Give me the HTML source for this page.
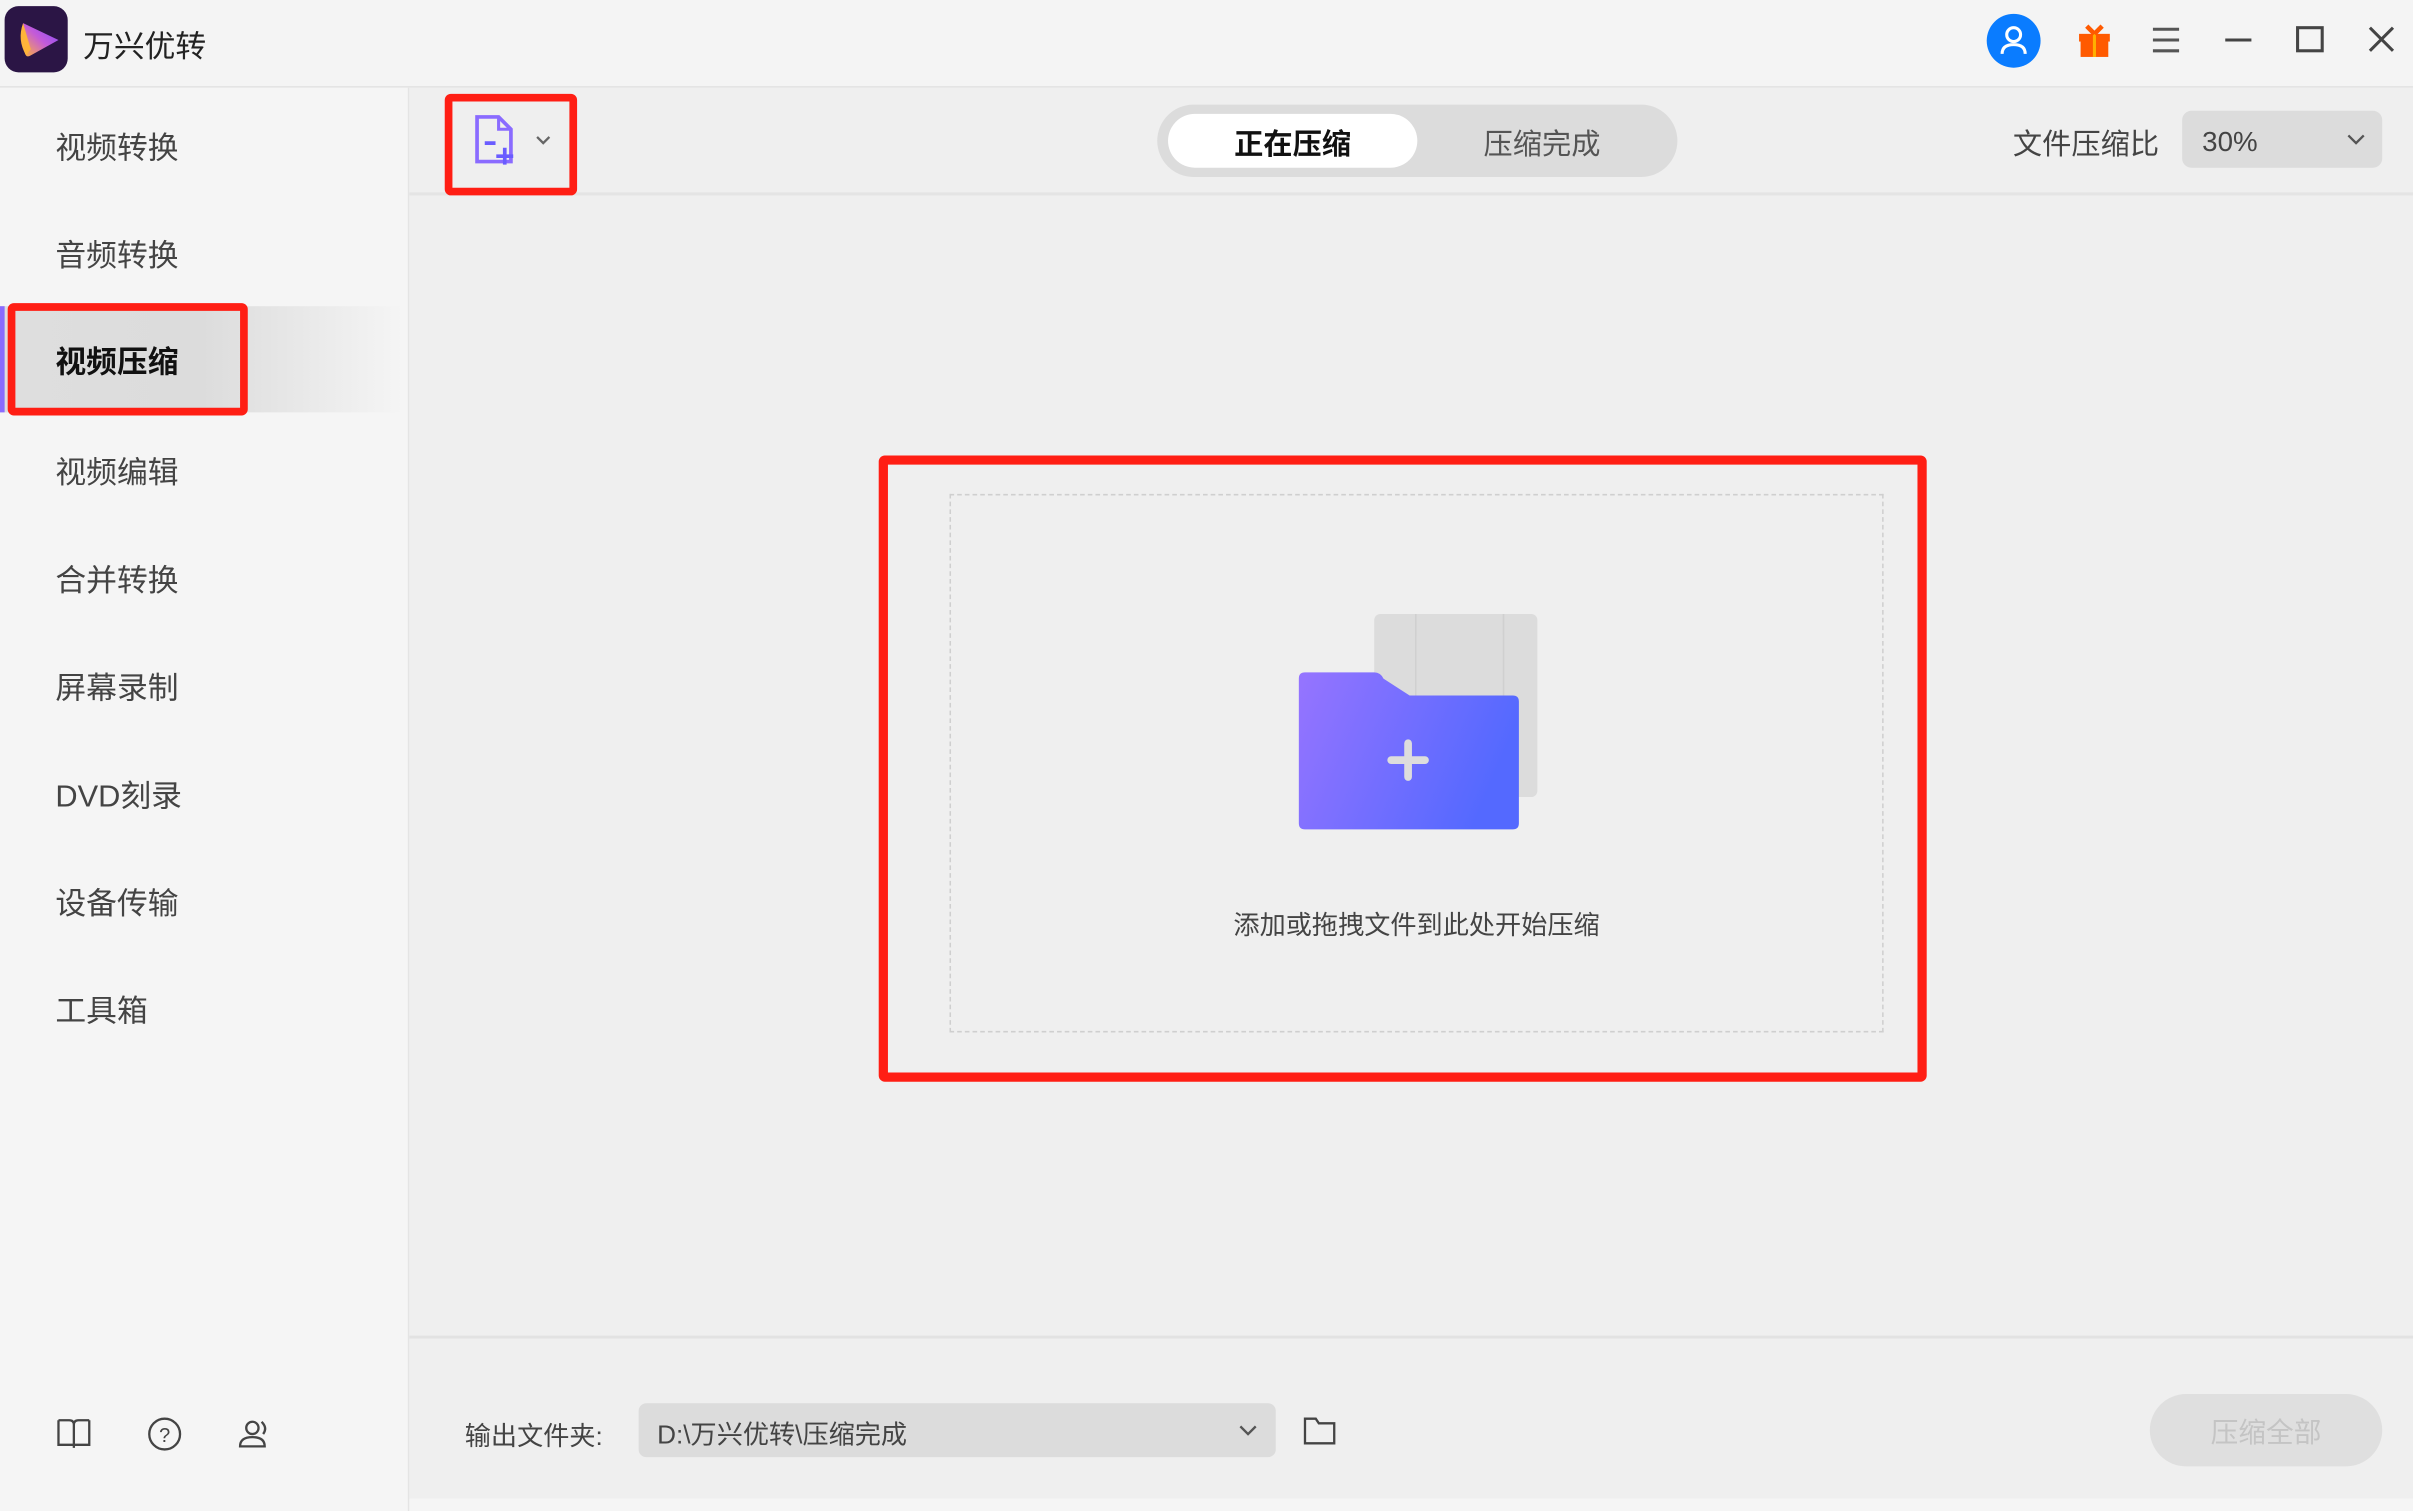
<!DOCTYPE html>
<html><head><meta charset="utf-8"><style>
html,body{margin:0;padding:0;width:2413px;height:1511px;overflow:hidden;background:#f4f4f4}
#s{position:absolute;left:0;top:0;width:1568px;height:982px;transform:scale(1.53890,1.53870);transform-origin:0 0;font-family:"Liberation Sans","Noto Sans CJK SC",sans-serif;color:#333}
.a{position:absolute}
.nav{position:absolute;left:36px;font-size:20px;color:#444;line-height:24px}
.red{position:absolute;border:5px solid #ff1e14;border-radius:4px;box-sizing:border-box}
</style></head><body><div id="s">
<div class="a" style="left:0;top:0;width:1568px;height:56px;background:#f4f4f4;border-bottom:1px solid #e2e2e2"></div>
<div class="a" style="left:3px;top:4px;width:41px;height:43px;border-radius:9px;background:#2b1545"></div>
<svg class="a" style="left:3px;top:4px" width="41" height="43" viewBox="0 0 41 43"><defs><linearGradient id="lg" x1="0" y1="1" x2="1" y2="0"><stop offset="0" stop-color="#ffb43a"/><stop offset="0.5" stop-color="#c45bd8"/><stop offset="1" stop-color="#7a4bff"/></linearGradient></defs><path d="M12 11 L35 22 L17 32 Q14 34 13 30 Z" fill="url(#lg)"/><path d="M12 11 Q8 22 14 32 L17 28 Z" fill="#ffb43a"/></svg>
<div class="a" style="left:54px;top:14px;font-size:20px;color:#222">万兴优转</div>
<div class="a" style="left:1291px;top:9px;width:35px;height:35px;border-radius:50%;background:#0a7cff"></div>
<svg class="a" style="left:1291px;top:9px" width="35" height="35"><circle cx="17.5" cy="13.5" r="4.5" fill="none" stroke="#fff" stroke-width="2"/><path d="M10 26 Q10 20 17.5 20 Q25 20 25 26" fill="none" stroke="#fff" stroke-width="2"/></svg>
<svg class="a" style="left:1349px;top:14px" width="24" height="24"><rect x="2" y="8" width="20" height="5" fill="#ff5a00"/><rect x="3" y="12" width="18" height="11" fill="#ff5a00"/><rect x="11" y="8" width="2" height="15" fill="#ffb000"/><path d="M12 8 L7 3 M12 8 L17 3" stroke="#ff5a00" stroke-width="3"/></svg>
<svg class="a" style="left:1397px;top:16px" width="22" height="20"><path d="M2 3H19M2 10H19M2 17H19" stroke="#555" stroke-width="2"/></svg>
<svg class="a" style="left:1445px;top:16px" width="22" height="20"><path d="M1 10H18" stroke="#444" stroke-width="2"/></svg>
<svg class="a" style="left:1491px;top:16px" width="22" height="20"><rect x="2" y="2" width="16" height="15" fill="none" stroke="#444" stroke-width="2"/></svg>
<svg class="a" style="left:1538px;top:16px" width="22" height="20"><path d="M2 2L17 17M17 2L2 17" stroke="#444" stroke-width="2"/></svg>
<div class="a" style="left:0;top:57px;width:265px;height:925px;background:#f5f5f5;border-right:1px solid #e4e4e4"></div>
<div class="a" style="left:0;top:199px;width:262px;height:69px;background:linear-gradient(90deg,#dedede,#dcdcdc 50%,rgba(240,240,240,0))"></div>
<div class="a" style="left:0;top:199px;width:3px;height:69px;background:#8a6bff"></div>
<div class="nav" style="top:85px">视频转换</div>
<div class="nav" style="top:155px">音频转换</div>
<div class="nav" style="top:224px;color:#111;font-weight:bold">视频压缩</div>
<div class="nav" style="top:296px">视频编辑</div>
<div class="nav" style="top:366px">合并转换</div>
<div class="nav" style="top:436px">屏幕录制</div>
<div class="nav" style="top:506px">DVD刻录</div>
<div class="nav" style="top:576px">设备传输</div>
<div class="nav" style="top:646px">工具箱</div>
<div class="red" style="left:5px;top:197px;width:156px;height:73px"></div>
<svg class="a" style="left:36px;top:920px" width="160" height="24"><path d="M2 3H9Q12 3 12 6V21M22 3H15Q12 3 12 6M2 3V19H12H22V3" fill="none" stroke="#444" stroke-width="1.5"/><circle cx="71" cy="12" r="10" fill="none" stroke="#444" stroke-width="1.5"/><text x="71" y="17" font-size="13" text-anchor="middle" fill="#444" font-family="Liberation Sans">?</text><circle cx="128" cy="8" r="4" fill="none" stroke="#444" stroke-width="1.5"/><path d="M120 20Q120 14 128 14Q136 14 136 20Z M134 4Q138 8 135 12" fill="none" stroke="#444" stroke-width="1.5"/></svg>
<div class="a" style="left:266px;top:57px;width:1302px;height:812px;background:#efefef"></div>
<div class="a" style="left:266px;top:125px;width:1302px;height:2px;background:#e4e4e4"></div>
<svg class="a" style="left:306px;top:74px" width="60" height="36"><path d="M4 2H18L26 10V31H4Z" fill="none" stroke="#8a6bff" stroke-width="2.4"/><path d="M18 2V10H26" fill="none" stroke="#8a6bff" stroke-width="2"/><path d="M9 19H16M22 22V33M16.5 27.5H27.5" stroke="#6a5cff" stroke-width="2.4"/><path d="M43 15L47 19L51 15" fill="none" stroke="#666" stroke-width="1.5"/></svg>
<div class="red" style="left:289px;top:61px;width:86px;height:66px"></div>
<div class="a" style="left:752px;top:68px;width:338px;height:47px;border-radius:24px;background:#dcdcdc"></div>
<div class="a" style="left:759px;top:74px;width:162px;height:35px;border-radius:18px;background:#fff"></div>
<div class="a" style="left:759px;top:79px;width:162px;text-align:center;font-size:19px;font-weight:bold;color:#111">正在压缩</div>
<div class="a" style="left:921px;top:79px;width:162px;text-align:center;font-size:19px;color:#555">压缩完成</div>
<div class="a" style="left:1308px;top:79px;font-size:19px;color:#444">文件压缩比</div>
<div class="a" style="left:1418px;top:72px;width:130px;height:37px;border-radius:6px;background:#dcdcdc"></div>
<div class="a" style="left:1431px;top:82px;font-size:18px;color:#444">30%</div>
<svg class="a" style="left:1524px;top:86px" width="14" height="10"><path d="M2 2L7 7L12 2" fill="none" stroke="#555" stroke-width="1.5"/></svg>
<div class="a" style="left:617px;top:321px;width:607px;height:350px;border:1.5px dashed #cfcfcf;box-sizing:border-box"></div>
<svg class="a" style="left:840px;top:395px" width="165" height="150"><defs><linearGradient id="fg" x1="0" y1="0" x2="1" y2="0.3"><stop offset="0" stop-color="#9674ff"/><stop offset="1" stop-color="#5469ff"/></linearGradient></defs><rect x="53" y="4" width="106" height="119" rx="4" fill="#dcdcdc"/><path d="M80 4V118M137 4V118" stroke="#d0d0d0"/><path d="M8 42Q4 42 4 46V140Q4 144 8 144H143Q147 144 147 140V61Q147 57 143 57H76L59 46Q57 42 53 42Z" fill="url(#fg)"/><path d="M75 88V110M64 99H86" stroke="#ddd" stroke-width="5" stroke-linecap="round"/></svg>
<div class="a" style="left:617px;top:587px;width:607px;text-align:center;font-size:17px;color:#444">添加或拖拽文件到此处开始压缩</div>
<div class="red" style="left:571px;top:296px;width:681px;height:407px;border-width:6px"></div>
<div class="a" style="left:266px;top:868px;width:1302px;height:2px;background:#e2e2e2"></div>
<div class="a" style="left:266px;top:870px;width:1302px;height:104px;background:#efefef"></div>
<div class="a" style="left:266px;top:974px;width:1302px;height:8px;background:#f5f5f5"></div>
<div class="a" style="left:302px;top:919px;font-size:17px;color:#444">输出文件夹:</div>
<div class="a" style="left:415px;top:912px;width:414px;height:35px;border-radius:5px;background:#dcdcdc"></div>
<div class="a" style="left:427px;top:918px;font-size:17px;color:#444">D:\万兴优转\压缩完成</div>
<svg class="a" style="left:804px;top:925px" width="14" height="10"><path d="M2 2L7 7L12 2" fill="none" stroke="#555" stroke-width="1.5"/></svg>
<svg class="a" style="left:846px;top:919px" width="24" height="22"><path d="M2 3H9L11 6H21V19H2Z" fill="none" stroke="#444" stroke-width="1.5"/></svg>
<div class="a" style="left:1397px;top:906px;width:151px;height:47px;border-radius:24px;background:#dfdfdf"></div>
<div class="a" style="left:1397px;top:917px;width:151px;text-align:center;font-size:18px;color:#c4c4c4">压缩全部</div>
</div></body></html>
